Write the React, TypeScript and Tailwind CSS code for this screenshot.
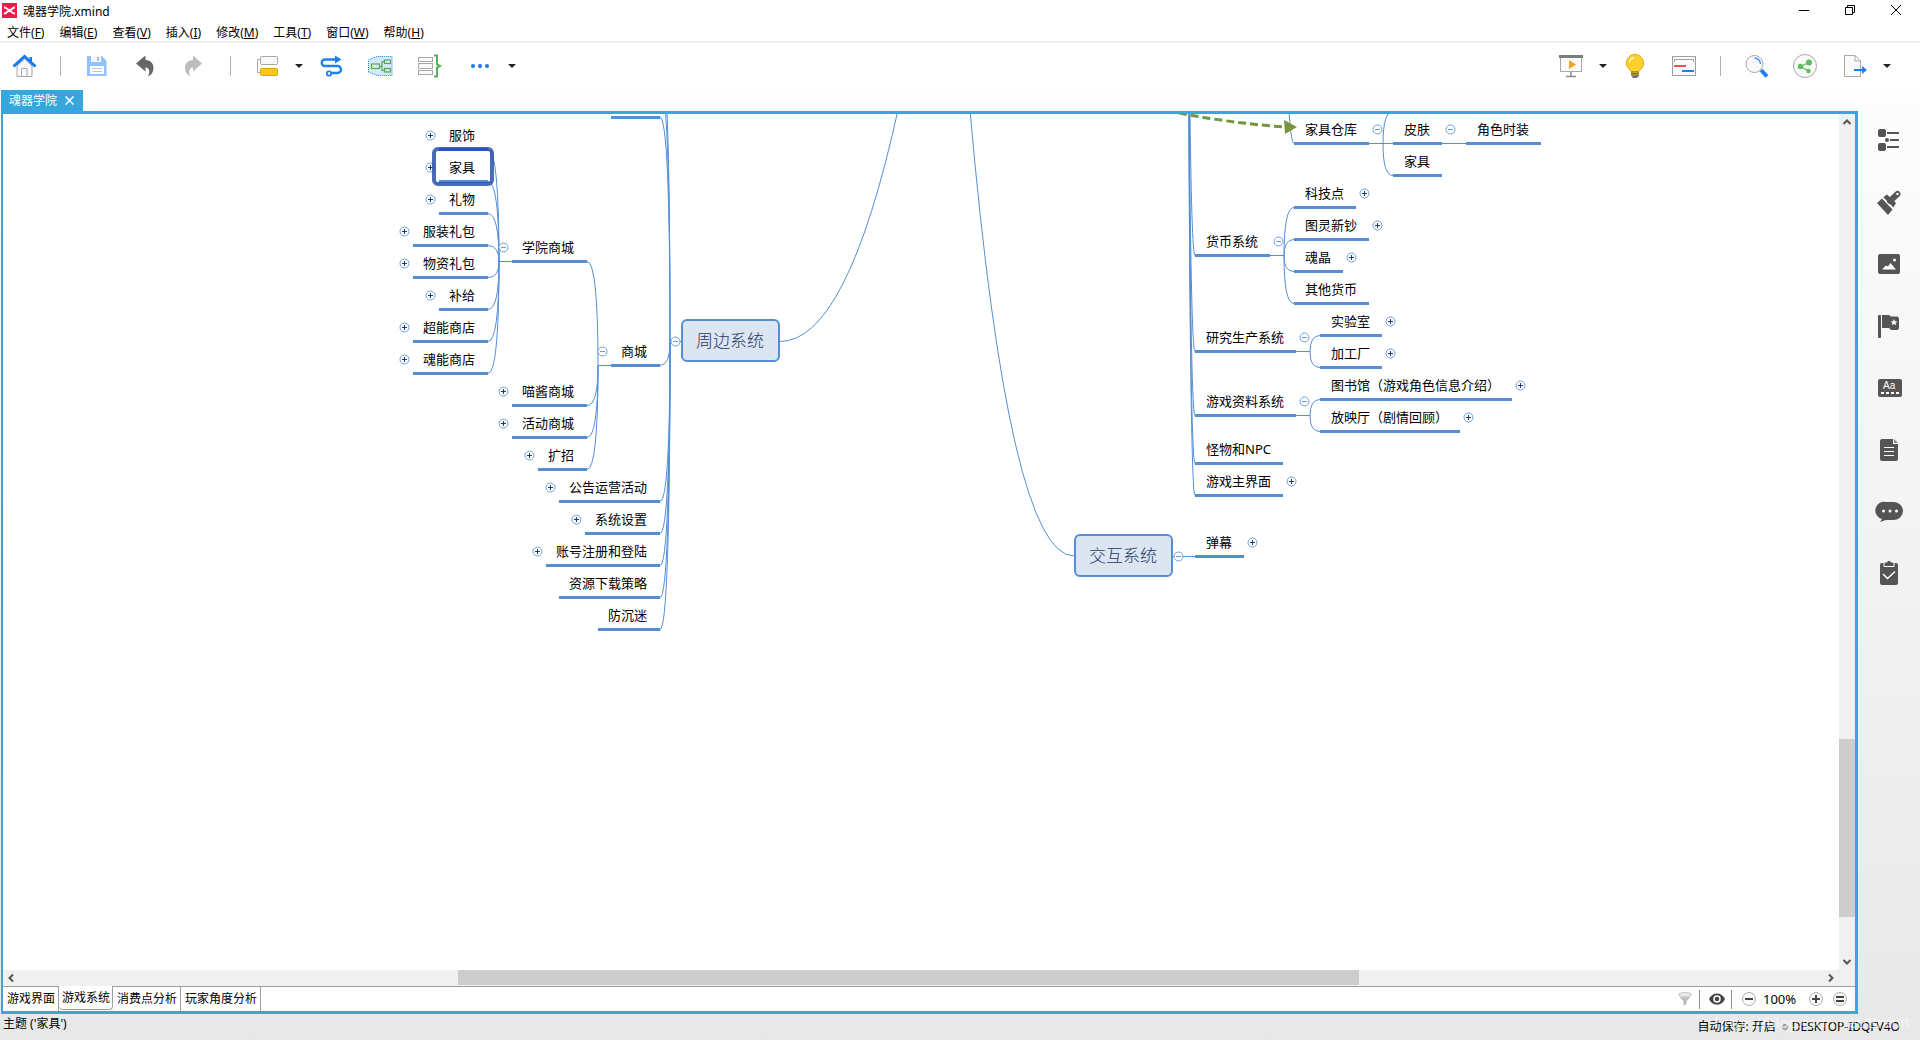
import React, { useState } from 'react';

type Side = 'left' | 'right';
type Toggle = 'plus' | 'minus' | 'none';

interface TopicData {
  text: string;
  // edge next to the parent: right edge for left-hand topics, left edge for right-hand ones
  x: number;
  bottom: number;
  side: Side;
  toggle: Toggle;
}

// top-left corner of the visible part of the map
const VIEW = { x: 3, y: 114 };

const topics: TopicData[] = [
  { text: '服饰', x: 488, bottom: 151, side: 'left', toggle: 'plus' },
  { text: '家具', x: 488, bottom: 183, side: 'left', toggle: 'plus' },
  { text: '礼物', x: 488, bottom: 215, side: 'left', toggle: 'plus' },
  { text: '服装礼包', x: 488, bottom: 247, side: 'left', toggle: 'plus' },
  { text: '物资礼包', x: 488, bottom: 279, side: 'left', toggle: 'plus' },
  { text: '补给', x: 488, bottom: 311, side: 'left', toggle: 'plus' },
  { text: '超能商店', x: 488, bottom: 343, side: 'left', toggle: 'plus' },
  { text: '魂能商店', x: 488, bottom: 375, side: 'left', toggle: 'plus' },
  { text: '学院商城', x: 587, bottom: 263, side: 'left', toggle: 'minus' },
  { text: '喵酱商城', x: 587, bottom: 407, side: 'left', toggle: 'plus' },
  { text: '活动商城', x: 587, bottom: 439, side: 'left', toggle: 'plus' },
  { text: '扩招', x: 587, bottom: 471, side: 'left', toggle: 'plus' },
  { text: '商城', x: 660, bottom: 367, side: 'left', toggle: 'minus' },
  { text: '公告运营活动', x: 660, bottom: 503, side: 'left', toggle: 'plus' },
  { text: '系统设置', x: 660, bottom: 535, side: 'left', toggle: 'plus' },
  { text: '账号注册和登陆', x: 660, bottom: 567, side: 'left', toggle: 'plus' },
  { text: '资源下载策略', x: 660, bottom: 599, side: 'left', toggle: 'none' },
  { text: '防沉迷', x: 660, bottom: 631, side: 'left', toggle: 'none' },
  { text: '家具仓库', x: 1294, bottom: 145, side: 'right', toggle: 'minus' },
  { text: '皮肤', x: 1393, bottom: 145, side: 'right', toggle: 'minus' },
  { text: '角色时装', x: 1466, bottom: 145, side: 'right', toggle: 'none' },
  { text: '家具', x: 1393, bottom: 177, side: 'right', toggle: 'none' },
  { text: '货币系统', x: 1195, bottom: 257, side: 'right', toggle: 'minus' },
  { text: '科技点', x: 1294, bottom: 209, side: 'right', toggle: 'plus' },
  { text: '图灵新钞', x: 1294, bottom: 241, side: 'right', toggle: 'plus' },
  { text: '魂晶', x: 1294, bottom: 273, side: 'right', toggle: 'plus' },
  { text: '其他货币', x: 1294, bottom: 305, side: 'right', toggle: 'none' },
  { text: '研究生产系统', x: 1195, bottom: 353, side: 'right', toggle: 'minus' },
  { text: '实验室', x: 1320, bottom: 337, side: 'right', toggle: 'plus' },
  { text: '加工厂', x: 1320, bottom: 369, side: 'right', toggle: 'plus' },
  { text: '游戏资料系统', x: 1195, bottom: 417, side: 'right', toggle: 'minus' },
  { text: '图书馆（游戏角色信息介绍）', x: 1320, bottom: 401, side: 'right', toggle: 'plus' },
  { text: '放映厅（剧情回顾）', x: 1320, bottom: 433, side: 'right', toggle: 'plus' },
  { text: '怪物和NPC', x: 1195, bottom: 465, side: 'right', toggle: 'none' },
  { text: '游戏主界面', x: 1195, bottom: 497, side: 'right', toggle: 'plus' },
  { text: '弹幕', x: 1195, bottom: 558, side: 'right', toggle: 'plus' },
];

// each branch fans out from one joint to the edges of its children
const branches = [
  { jx: 499, jy: 262, x: 488, ys: [150, 182, 214, 246, 278, 310, 342, 374] },
  { jx: 598, jy: 366, x: 587, ys: [262, 406, 438, 470] },
  { jx: 670, jy: 342, x: 660, ys: [53, 85, 118, 366, 502, 534, 566, 598, 630] },
  { jx: 1188, jy: -400, x: 1195, ys: [256, 352, 416, 464, 496] },
  { jx: 1284, jy: -235, x: 1294, ys: [144] },
  { jx: 1383, jy: 144, x: 1393, ys: [112, 176] },
  { jx: 1284, jy: 256, x: 1294, ys: [208, 240, 272, 304] },
  { jx: 1310, jy: 352, x: 1320, ys: [336, 368] },
  { jx: 1310, jy: 416, x: 1320, ys: [400, 432] },
];

const stems = [
  'M499 261.5H512',
  'M598 365.5H611',
  'M670 341.5H682',
  'M1369 143.5H1393',
  'M1442 143.5H1466',
  'M1270 255.5H1284',
  'M1296 351.5H1310',
  'M1296 415.5H1310',
  'M1173 556.5H1195',
];

const menus = [
  ['文件', 'F'],
  ['编辑', 'E'],
  ['查看', 'V'],
  ['插入', 'I'],
  ['修改', 'M'],
  ['工具', 'T'],
  ['窗口', 'W'],
  ['帮助', 'H'],
];

function Svg({ children }: { children: React.ReactNode }) {
  return (
    <svg width="24" height="24" viewBox="0 0 24 24" fill="none" className="block overflow-visible">
      {children}
    </svg>
  );
}

function HomeIcon() {
  return (
    <Svg>
      <path d="M5 12V22.5H20V12L12.5 5Z" fill="#fafafa" stroke="#a8a8a8" />
      <path d="M9.5 22.5V14.5H15V22.5" stroke="#a8a8a8" />
      <path d="M17.5 3H20V8H17.5Z" fill="#1478f0" />
      <path d="M1.5 12.5L12.5 2.5L23.5 12.5" stroke="#1478f0" strokeWidth="3" />
    </Svg>
  );
}

function SaveIcon() {
  return (
    <Svg>
      <path d="M2 2H17L21.5 7V22H2Z" fill="#90c2fd" />
      <path d="M6 2H16V8H6Z" fill="#f4f8fd" />
      <path d="M12 3H14V7H12Z" fill="#b8bec6" />
      <path d="M5 12H19V20H5Z" fill="#fff" />
      <path d="M7 14.5H17M7 17.5H17" stroke="#c2c6cc" />
    </Svg>
  );
}

function UndoIcon() {
  return (
    <Svg>
      <path d="M3 9.5L12.5 1.5V6C18 6 20.5 10 20.5 14C20.5 18 18.5 21 15 22.5C17 19 17 13.5 12.5 13.5V17.5Z" fill="#666" />
    </Svg>
  );
}

function RedoIcon() {
  return (
    <Svg>
      <path d="M21 9.5L12 1.5V6C6.5 6 4 10 4 14C4 18 6 21 9.5 22.5C7.5 19 7.5 13.5 12 13.5V17.5Z" fill="#bcbcbc" />
    </Svg>
  );
}

function TopicIcon() {
  return (
    <Svg>
      <path d="M5 5.5H2.5V18.5H5" stroke="#aaa" />
      <rect x="5.5" y="2.5" width="17" height="8" rx="1" fill="#f8f8f8" stroke="#a8a8a8" />
      <rect x="5.5" y="14.5" width="17" height="7" rx="1" fill="#fcc719" stroke="#dba50f" />
    </Svg>
  );
}

function RelationIcon() {
  return (
    <Svg>
      <path d="M17 5.5H6A3.2 3.2 0 0 0 6 12H18.5A3.5 3.5 0 0 1 18.5 19H12.5" stroke="#1c80ee" strokeWidth="2.4" />
      <circle cx="10" cy="19.5" r="2.2" stroke="#1c80ee" strokeWidth="1.8" />
      <path d="M16 1.5L22.5 5.5L16 9.5Z" fill="#1c80ee" />
    </Svg>
  );
}

function BoundaryIcon() {
  return (
    <Svg>
      <path d="M0.5 6L9 2.5H24V21.5H9L0.5 18Z" fill="#d3e9fa" />
      <path d="M24 2V22" stroke="#8fc0f5" />
      <path d="M0.5 18V6L9 2.5H24M0.5 18L9 21.5H24" stroke="#1c80ee" strokeDasharray="1 1" />
      <rect x="3.5" y="10" width="8" height="4.5" stroke="#55a857" strokeWidth="1.2" />
      <rect x="16.5" y="6" width="6" height="3.5" stroke="#55a857" strokeWidth="1.2" />
      <rect x="16.5" y="14.5" width="6" height="3.5" stroke="#55a857" strokeWidth="1.2" />
      <path d="M11.5 12.3H14M16.5 7.7H14V16.3H16.5" stroke="#55a857" strokeWidth="1.2" />
    </Svg>
  );
}

function SummaryIcon() {
  return (
    <Svg>
      <rect x="1.5" y="3.5" width="14" height="4" fill="#fafafa" stroke="#a8a8a8" />
      <rect x="1.5" y="9.5" width="14" height="5" fill="#fafafa" stroke="#a8a8a8" />
      <rect x="1.5" y="16.5" width="14" height="4" fill="#fafafa" stroke="#a8a8a8" />
      <path d="M17 1.500H20V10.5L23 12L20 13.5V22.5H17" stroke="#5bb05c" strokeWidth="2" />
    </Svg>
  );
}

function MoreIcon() {
  return (
    <Svg>
      <g fill="#1478f0">
        <circle cx="5" cy="12" r="2" />
        <circle cx="12" cy="12" r="2" />
        <circle cx="19" cy="12" r="2" />
      </g>
    </Svg>
  );
}

function PresentIcon() {
  return (
    <Svg>
      <rect x="1.5" y="3.5" width="21" height="14" fill="#fafafa" stroke="#a8a8a8" />
      <path d="M0 1H24V4H0Z" fill="#7c7c7c" />
      <path d="M10 6L17 10.5L10 15Z" fill="#f6a11f" />
      <path d="M12 18V22M7 22.5H17" stroke="#8a8a8a" strokeWidth="1.5" />
    </Svg>
  );
}

function BulbIcon() {
  return (
    <Svg>
      <path d="M12 0.5A8.5 8.5 0 0 0 6.5 15.5L8 17.5H16L17.5 15.5A8.5 8.5 0 0 0 12 0.5Z" fill="#fdd02c" stroke="#e2a917" />
      <path d="M6.5 8A5.5 5.5 0 0 1 11 3.5" stroke="#fff3bf" strokeWidth="1.5" />
      <path d="M8 17.5H16V21.5L14 24H10L8 21.5Z" fill="#707070" />
      <path d="M8 19L16 18M8 21.5L16 20.5" stroke="#dba50f" />
    </Svg>
  );
}

function SlideIcon() {
  return (
    <Svg>
      <rect x="0.5" y="2.5" width="23" height="19" fill="#fafafa" stroke="#a0a0a0" />
      <path d="M2.5 8V5.5H21.5V8" stroke="#a0a0a0" />
      <path d="M2 12H14" stroke="#f05050" strokeWidth="2" />
      <path d="M10 17H22" stroke="#1c80ee" strokeWidth="2" />
    </Svg>
  );
}

function SearchIcon() {
  return (
    <Svg>
      <path d="M16 16L22 22.5" stroke="#1c80ee" strokeWidth="4" />
      <circle cx="9.5" cy="10" r="8.5" fill="#fafafa" stroke="#a8a8a8" />
      <path d="M9.5 4A6 6 0 0 1 15.5 10" stroke="#3f97f3" strokeWidth="1.5" />
    </Svg>
  );
}

function ShareIcon() {
  return (
    <Svg>
      <circle cx="12" cy="12" r="11.5" fill="#fafafa" stroke="#a8a8a8" />
      <path d="M16 8.5L7.5 12.5L15.5 17" stroke="#5fbb5f" strokeWidth="1.3" />
      <g fill="#5fbb5f">
        <circle cx="7.5" cy="12.5" r="2.7" />
        <circle cx="16" cy="8.5" r="3" />
        <circle cx="15.5" cy="17" r="2.2" />
      </g>
    </Svg>
  );
}

function ExportIcon() {
  return (
    <Svg>
      <path d="M1.5 1.5H12L17.5 7V22.5H1.5Z" fill="#fafafa" stroke="#a8a8a8" />
      <path d="M12 1.5V7H17.5" stroke="#a8a8a8" />
      <path d="M11 16H20" stroke="#1c80ee" strokeWidth="2" />
      <path d="M19 12L24 16L19 20Z" fill="#1c80ee" />
    </Svg>
  );
}

const panels = [
  {
    label: '大纲',
    icon: (
      <g fill="#555">
        <rect x="1" y="1" width="8" height="8" rx="2" />
        <rect x="1" y="15" width="8" height="8" rx="2" />
        <circle cx="10" cy="12" r="2" />
        <path d="M10 4H22V6H10ZM13 11H22V13H13ZM10 18H22V20H10Z" />
      </g>
    ),
  },
  {
    label: '格式',
    icon: (
      <g>
        <path d="M0 13L5 8.5L15.5 19.5L11 25Z" fill="#555" />
        <path d="M6.300 7.300L10 4.5L19 13L16.5 17.5Z" fill="#555" />
        <path d="M13 11L20.5 4" stroke="#555" strokeWidth="6" strokeLinecap="round" />
        <circle cx="20.5" cy="4" r="1.2" fill="#fff" />
      </g>
    ),
  },
  {
    label: '图片',
    icon: (
      <g>
        <rect x="1" y="2" width="22" height="20" rx="2" fill="#555" />
        <path d="M5 17.5L9 13.5L11 14.5L13.5 11L19 17.5Z" fill="#fff" />
        <circle cx="17.5" cy="8" r="1.5" fill="#fff" />
      </g>
    ),
  },
  {
    label: '图标',
    icon: (
      <g>
        <rect x="1" y="1" width="3" height="23" rx="1" fill="#555" />
        <path d="M5 1H12L14 2.5H20.5L22 4V14.5L20.5 16H14L12 14H5Z" fill="#555" />
        <path d="M17 5L18 7.3L20.3 7.5L18.6 9L19.2 11.3L17 10.1L14.8 11.3L15.4 9L13.7 7.5L16 7.3Z" fill="#fff" />
      </g>
    ),
  },
  {
    label: '标签',
    icon: (
      <g>
        <rect x="1" y="3" width="24" height="18" rx="2" fill="#555" />
        <text x="6" y="13" fontSize="10" fill="#fff" fontFamily="Liberation Sans">Aa</text>
        <path d="M4 17H22" stroke="#fff" strokeWidth="2" strokeDasharray="3 2" />
      </g>
    ),
  },
  {
    label: '备注',
    icon: (
      <g>
        <path d="M5 1H16V6H21V21A2 2 0 0 1 19 23H5A2 2 0 0 1 3 21V3A2 2 0 0 1 5 1Z" fill="#555" />
        <path d="M17 1L21 5H17Z" fill="#888" />
        <path d="M7 9.5H17M7 13.5H17M7 17.5H17" stroke="#fff" />
      </g>
    ),
  },
  {
    label: '批注',
    icon: (
      <g>
        <path d="M9 2H17A8 8 0 0 1 17 20H9L3 22L5 19A8 8 0 0 1 9 2Z" fill="#555" />
        <g fill="#fff">
          <circle cx="6.5" cy="11" r="1.5" />
          <circle cx="13" cy="11" r="1.5" />
          <circle cx="19.5" cy="11" r="1.5" />
        </g>
      </g>
    ),
  },
  {
    label: '任务',
    icon: (
      <g>
        <rect x="3" y="1" width="18" height="22" rx="2" fill="#555" />
        <path d="M7 1V4.5H17V1" stroke="#fff" />
        <path d="M8 0.5H10L11 -1H13L14 0.5H16V3.5H8Z" fill="#555" />
        <path d="M6 12L10.5 16.5L18 9.5" stroke="#fff" strokeWidth="1.5" />
      </g>
    ),
  },
];

function ToolButton({ label, className, children }: { label: string; className?: string; children: React.ReactNode }) {
  return (
    <button type="button" aria-label={label} className={className}>
      {children}
    </button>
  );
}

function Caret({ label }: { label: string }) {
  return (
    <button type="button" aria-label={label} className="ml-4">
      <svg width="8" height="4" viewBox="0 0 8 4" className="block">
        <path d="M0 0H8L4 4Z" fill="#222" />
      </svg>
    </button>
  );
}

function TitleBar() {
  return (
    <header className="flex h-6 items-center bg-white pl-0.5">
      <svg width="15" height="15" viewBox="0 0 15 15" className="mb-1">
        <rect width="15" height="15" fill="#f5194a" />
        <path d="M2 3.5C5 3.5 5.5 6 7.5 6S10 3.5 13 3.5V5.5C11 5.5 10.5 7.5 9.5 7.5S11 9.5 13 9.5V11.5C10 11.5 9.5 9 7.5 9S5 11.5 2 11.5V9.5C4 9.5 4.5 7.5 5.5 7.5S4 5.5 2 5.5Z" fill="#fff" />
      </svg>
      <h1 className="ml-1.5 flex-1 text-xs">魂器学院.xmind</h1>
      <div className="flex pr-px pb-1">
        <button type="button" aria-label="最小化" className="flex h-5 w-[46px] items-center justify-center">
          <svg width="10" height="10" viewBox="0 0 10 10"><path d="M0 5.5H10" stroke="#000" /></svg>
        </button>
        <button type="button" aria-label="还原" className="flex h-5 w-[46px] items-center justify-center">
          <svg width="10" height="10" viewBox="0 0 10 10" fill="none" stroke="#000">
            <path d="M0.5 2.5H7.5V9.5H0.5ZM2.5 2.5V0.5H9.5V7.5H7.5" />
          </svg>
        </button>
        <button type="button" aria-label="关闭" className="flex h-5 w-[46px] items-center justify-center">
          <svg width="10" height="10" viewBox="0 0 10 10"><path d="M0 0L10 10M10 0L0 10" stroke="#000" /></svg>
        </button>
      </div>
    </header>
  );
}

function MenuBar() {
  return (
    <nav className="flex h-[19px] items-center gap-[15px] border-b-2 border-[#efefef] bg-white pl-[7px]">
      {menus.map(([name, key]) => (
        <button key={key} type="button" className="text-xs leading-4">
          {name}(<span className="underline">{key}</span>)
        </button>
      ))}
    </nav>
  );
}

function Toolbar() {
  return (
    <div className="flex h-[46px] items-center bg-white pr-[29px] pl-3">
      <ToolButton label="主页"><HomeIcon /></ToolButton>
      <span className="ml-6 h-5 w-px bg-[#b0b0b0]" />
      <ToolButton label="保存" className="ml-6"><SaveIcon /></ToolButton>
      <ToolButton label="撤销" className="ml-6"><UndoIcon /></ToolButton>
      <ToolButton label="重做" className="ml-6"><RedoIcon /></ToolButton>
      <span className="ml-[25px] h-5 w-px bg-[#b0b0b0]" />
      <ToolButton label="主题" className="ml-6"><TopicIcon /></ToolButton>
      <Caret label="主题选项" />
      <ToolButton label="联系" className="ml-4"><RelationIcon /></ToolButton>
      <ToolButton label="外框" className="ml-[25px]"><BoundaryIcon /></ToolButton>
      <ToolButton label="概要" className="ml-[25px]"><SummaryIcon /></ToolButton>
      <ToolButton label="更多" className="ml-[27px]"><MoreIcon /></ToolButton>
      <Caret label="更多选项" />
      <div className="flex-1" />
      <ToolButton label="演示"><PresentIcon /></ToolButton>
      <Caret label="演示选项" />
      <ToolButton label="头脑风暴" className="ml-4"><BulbIcon /></ToolButton>
      <ToolButton label="甘特图" className="ml-[25px]"><SlideIcon /></ToolButton>
      <span className="ml-6 h-5 w-px bg-[#b0b0b0]" />
      <ToolButton label="搜索" className="ml-6"><SearchIcon /></ToolButton>
      <ToolButton label="分享" className="ml-6"><ShareIcon /></ToolButton>
      <ToolButton label="导出" className="ml-[26px]"><ExportIcon /></ToolButton>
      <Caret label="导出选项" />
    </div>
  );
}

function ToggleIcon({ kind }: { kind: Toggle }) {
  return (
    <svg width="11" height="11" viewBox="0 0 11 11" className="block">
      <circle cx="5.5" cy="5.5" r="4.5" fill="#fff" stroke="#6c9edb" />
      {kind === 'plus' ? (
        <path d="M3 5.5H8M5.5 3V8" stroke="#1f3864" />
      ) : (
        <path d="M3 5.5H8" stroke="#6c9edb" />
      )}
    </svg>
  );
}

function Topic({ topic }: { topic: TopicData }) {
  const isLeft = topic.side === 'left';
  return (
    <div
      className={`absolute -translate-y-full ${isLeft ? '-translate-x-full' : ''}`}
      style={{ left: topic.x - VIEW.x, top: topic.bottom - VIEW.y }}
    >
      <button
        type="button"
        className={`block border-b-[3px] border-[#558ed5] pb-[3px] text-[13px] leading-5 whitespace-nowrap text-black ${isLeft ? 'pr-[13px] pl-2.5' : 'pr-3 pl-[11px]'}`}
      >
        {topic.text}
      </button>
      {topic.toggle !== 'none' && (
        <button
          type="button"
          aria-label={topic.toggle === 'plus' ? '展开' : '收起'}
          className={`absolute bottom-2.5 ${isLeft ? '-left-3.5' : '-right-3.5'}`}
        >
          <ToggleIcon kind={topic.toggle} />
        </button>
      )}
    </div>
  );
}

function MainTopic({ text, x, y, side }: { text: string; x: number; y: number; side: Side }) {
  return (
    <div className="absolute" style={{ left: x - VIEW.x, top: y - VIEW.y }}>
      <button
        type="button"
        className="block rounded-md border-2 border-[#558ed5] bg-[#dce6f2] py-2 pr-3.5 pl-[13px] text-[17px] leading-[23px] font-light whitespace-nowrap text-[#1f3864]"
      >
        {text}
      </button>
      <button
        type="button"
        aria-label="收起"
        className={`absolute top-[17px] ${side === 'left' ? '-left-[11px]' : '-right-[11px]'}`}
      >
        <ToggleIcon kind="minus" />
      </button>
    </div>
  );
}

function MindMap() {
  return (
    <main className="relative min-w-0 flex-1 overflow-hidden bg-white">
      <svg className="absolute inset-0 h-full w-full" fill="none">
        <g transform={`translate(${-VIEW.x} ${-VIEW.y})`}>
          <g stroke="#558ed5">
            {branches.map((b) =>
              b.ys.map((y) => (
                <path key={`${b.jx}-${b.jy}-${y}`} d={`M${b.x} ${y - 0.5}Q${b.jx} ${y - 0.5} ${b.jx} ${b.jy}`} />
              ))
            )}
            {stems.map((d) => (
              <path key={d} d={d} />
            ))}
            <path d="M780 341.5Q847 341.5 898 110" />
            <path d="M970 110Q1009 556 1074 556" />
          </g>
          <path d="M611 117.5H660" stroke="#558ed5" strokeWidth="3" />
          <path d="M1179 113Q1230 123 1285 127" stroke="#77933c" strokeWidth="3" strokeDasharray="8 4" />
          <path d="M1284 120L1297 127L1285 134Z" fill="#77933c" />
        </g>
      </svg>
      {topics.map((topic) => (
        <Topic key={`${topic.x}-${topic.bottom}`} topic={topic} />
      ))}
      <MainTopic text="周边系统" x={681} y={319} side="left" />
      <MainTopic text="交互系统" x={1074} y={534} side="right" />
      {/* selection frame around the active topic */}
      <div
        className="pointer-events-none absolute h-[39px] w-[62px] rounded-md border-4 border-[#1b47a8]/80"
        style={{ left: 432 - VIEW.x, top: 147 - VIEW.y }}
      />
    </main>
  );
}

function ScrollArrow({ d, label }: { d: string; label: string }) {
  return (
    <button type="button" aria-label={label} className="flex h-4 w-4 shrink-0 items-center justify-center">
      <svg width="10" height="10" viewBox="0 0 10 10" fill="none" stroke="#555" strokeWidth="2">
        <path d={d} />
      </svg>
    </button>
  );
}

function SheetTabs() {
  const [active, setActive] = useState('游戏系统');
  const sheets = ['游戏界面', '游戏系统', '消费点分析', '玩家角度分析'];

  return (
    <div className="flex h-[25px] bg-white">
      {sheets.map((sheet) => (
        <button
          key={sheet}
          type="button"
          onClick={() => setActive(sheet)}
          className={
            sheet === active
              ? 'mb-px rounded-b-sm border-r border-b border-[#a0a0a0] pr-0.5 pl-[3px] text-xs'
              : 'border-t border-r border-[#a0a0a0] pr-[3px] pl-1 text-xs'
          }
        >
          {sheet}
        </button>
      ))}
      <div className="flex flex-1 items-center justify-end border-t border-[#a0a0a0] pr-2">
        <button type="button" aria-label="筛选">
          <svg width="14" height="14" viewBox="0 0 14 14" className="block">
            <ellipse cx="7" cy="2.5" rx="6.5" ry="1.8" fill="#f2f2f2" stroke="#bbb" />
            <path d="M1 4.5L5.5 9V14L8.5 12V9L13 4.5C11 5.5 3 5.5 1 4.5Z" fill="#bbb" />
          </svg>
        </button>
        <span className="ml-[7px] h-[19px] w-px bg-[#909090]" />
        <button type="button" aria-label="显示" className="ml-[9px]">
          <svg width="16" height="12" viewBox="0 0 16 12" className="block">
            <path d="M0 6C3 -1.5 13 -1.5 16 6C13 13.5 3 13.5 0 6Z" fill="#444" />
            <circle cx="8" cy="6" r="3" fill="#444" stroke="#fff" strokeWidth="1.5" />
          </svg>
        </button>
        <span className="ml-1.5 h-[19px] w-px bg-[#909090]" />
        <button type="button" aria-label="缩小" className="ml-2.5">
          <svg width="14" height="14" viewBox="0 0 14 14" className="block">
            <circle cx="7" cy="7" r="6.5" fill="#fafafa" stroke="#aaa" />
            <path d="M3 7H11" stroke="#444" strokeWidth="2" />
          </svg>
        </button>
        <span className="w-[53px] pl-[7px] text-[13px] leading-5">100%</span>
        <button type="button" aria-label="放大">
          <svg width="14" height="14" viewBox="0 0 14 14" className="block">
            <circle cx="7" cy="7" r="6.5" fill="#fafafa" stroke="#aaa" />
            <path d="M3 7H11M7 3V11" stroke="#444" strokeWidth="2" />
          </svg>
        </button>
        <button type="button" aria-label="实际大小" className="ml-2.5">
          <svg width="14" height="14" viewBox="0 0 14 14" className="block">
            <circle cx="7" cy="7" r="6.5" fill="#fafafa" stroke="#aaa" />
            <path d="M3 5H11M3 9H11" stroke="#444" strokeWidth="2" />
          </svg>
        </button>
      </div>
    </div>
  );
}

function Editor() {
  return (
    <section className="ml-px flex min-w-0 flex-1 flex-col border-[3px] border-l-2 border-[#35a7dc]">
      <div className="flex min-h-0 flex-1">
        <MindMap />
        <div className="flex w-4 flex-col bg-[#f0f0f0]">
          <ScrollArrow label="向上滚动" d="M1.5 7L5 3.5L8.5 7" />
          <div className="grow-[609]" />
          <div className="grow-[178] bg-[#cdcdcd]" />
          <div className="grow-[37]" />
          <ScrollArrow label="向下滚动" d="M1.5 3L5 6.5L8.5 3" />
        </div>
      </div>
      <div className="flex h-4 bg-[#f0f0f0] pr-4">
        <ScrollArrow label="向左滚动" d="M7 1.5L3.5 5L7 8.5" />
        <div className="grow-[439]" />
        <div className="mb-px grow-[901] bg-[#cdcdcd]" />
        <div className="grow-[464]" />
        <ScrollArrow label="向右滚动" d="M3 1.5L6.5 5L3 8.5" />
      </div>
      <SheetTabs />
    </section>
  );
}

function Sidebar() {
  return (
    <aside className="flex w-[62px] flex-col items-center gap-[38px] pt-[17px]">
      {panels.map((panel) => (
        <button key={panel.label} type="button" aria-label={panel.label}>
          <Svg>{panel.icon}</Svg>
        </button>
      ))}
    </aside>
  );
}

function StatusBar() {
  return (
    <footer className="relative flex h-[26px] items-center justify-between pr-5 pl-[3px] text-xs">
      <span className="pb-1.5">主题 ('家具')</span>
      <div className="flex items-center">
        <span>自动保存: 开启</span>
        <span className="mr-1 ml-1.5 h-1.5 w-1.5 rounded-full border border-[#888] bg-[#bbb]" />
        <span>DESKTOP-IDQFV4O</span>
      </div>
      <span className="pointer-events-none absolute -top-1 right-2.5 text-[15px] leading-6 text-white/60">
        https://blog.csdn.net/Brault
      </span>
    </footer>
  );
}

function App() {
  return (
    <div className="flex h-screen flex-col overflow-hidden bg-linear-to-b from-white to-[#e8e8e8] font-['Noto_Sans','Noto_Sans_CJK_SC',sans-serif] text-black">
      <TitleBar />
      <MenuBar />
      <Toolbar />
      <div className="flex h-[22px] items-end pl-px">
        <div className="flex h-[21px] items-center gap-2 bg-[#35a7dc] pr-[9px] pl-2 text-xs text-white">
          <span>魂器学院</span>
          <button type="button" aria-label="关闭标签">
            <svg width="9" height="9" viewBox="0 0 9 9" className="block">
              <path d="M0.5 0.5L8.5 8.5M8.5 0.5L0.5 8.5" stroke="#fff" strokeWidth="1.5" />
            </svg>
          </button>
        </div>
      </div>
      <div className="flex min-h-0 flex-1">
        <Editor />
        <Sidebar />
      </div>
      <StatusBar />
    </div>
  );
}

export default App;
